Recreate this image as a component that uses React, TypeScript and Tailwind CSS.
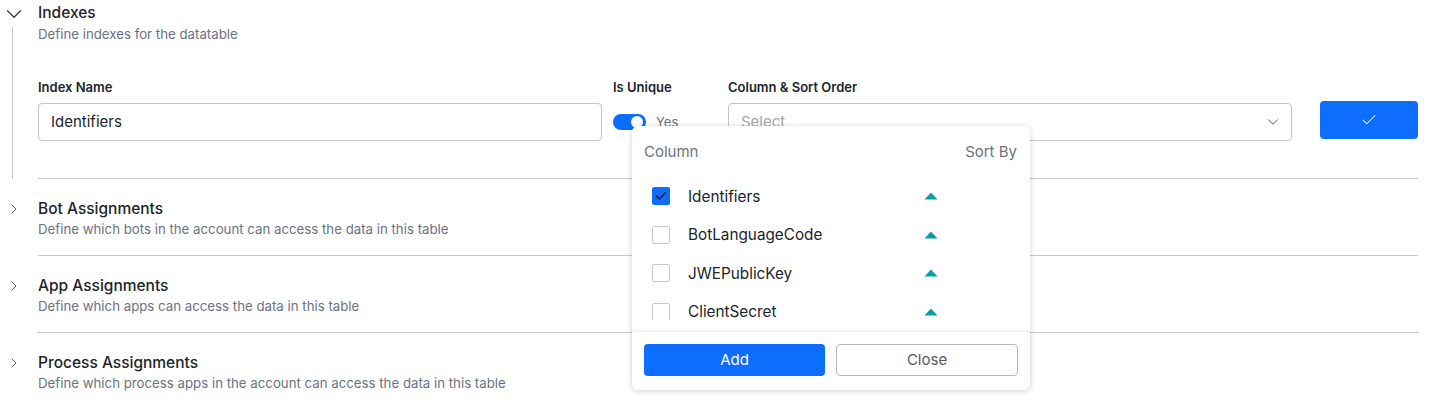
import { Check, ChevronDown, ChevronRight } from 'lucide-react';

const COLUMNS = [
  { name: 'Identifiers', checked: true },
  { name: 'BotLanguageCode', checked: false },
  { name: 'JWEPublicKey', checked: false },
  { name: 'ClientSecret', checked: false },
];

const SECTIONS = [
  { title: 'Bot Assignments', desc: 'Define which bots in the account can access the data in this table' },
  { title: 'App Assignments', desc: 'Define which apps can access the data in this table' },
  { title: 'Process Assignments', desc: 'Define which process apps in the account can access the data in this table' },
];

function SortArrow() {
  return (
    <svg width="14" height="8" viewBox="0 0 14 8" className="shrink-0">
      <path d="M7 0.5 L13.5 7.5 L0.5 7.5 Z" fill="#0e9ba5" />
    </svg>
  );
}

function ColumnPicker() {
  return (
    <div className="absolute left-[-96px] top-[47px] z-10 w-[398px] rounded-md bg-white shadow-[0_1px_6px_rgba(0,0,0,0.18)]">
      <div className="flex h-[44px] items-start justify-between pl-3 pr-[13px] pt-4 text-[15px] leading-5 text-[#6b7280]">
        <span>Column</span>
        <span>Sort By</span>
      </div>
      <div className="h-[150px] overflow-hidden pt-[7px]">
        {COLUMNS.map((col) => (
          <div key={col.name} className="flex h-[38.5px] items-center pl-5">
            {col.checked ? (
              <span className="flex h-[18px] w-[18px] items-center justify-center rounded-[2px] bg-[#0d6efd]">
                <Check size={14} strokeWidth={2.5} className="text-[#1a1a1a]" />
              </span>
            ) : (
              <span className="h-[18px] w-[18px] rounded-[2px] border border-[#c7c7c7] bg-white" />
            )}
            <span className="ml-[18px] w-[236px] text-[15.3px] leading-[15px] text-[#212529]">{col.name}</span>
            <SortArrow />
          </div>
        ))}
      </div>
      <div className="h-[12px]" />
      <div className="flex gap-[11px] rounded-b-md px-3 pb-[14px] pt-3 shadow-[0_-2px_3px_rgba(0,0,0,0.07)]">
        <button className="h-8 w-[181px] rounded-[4px] bg-[#0d6efd] text-[15px] text-white">Add</button>
        <button className="h-8 w-[182px] rounded-[4px] border border-[#b8b8b8] bg-white text-[15px] text-[#555b61]">
          Close
        </button>
      </div>
    </div>
  );
}

function IndexesSection() {
  return (
    <div className="flex">
      <div className="flex w-[38px] shrink-0 flex-col items-start">
        <ChevronDown size={26} strokeWidth={1.2} className="ml-[1px] mt-[1px] text-[#3c4147]" />
        <div className="ml-3 flex-1 border-l border-[#c9c9c9]" />
      </div>
      <div className="mr-[13px] flex-1 border-b border-[#c9c9c9] pb-[37px] pt-[3px]">
        <div className="text-[15.5px] font-medium leading-5 text-[#212529]">Indexes</div>
        <div className="mt-[3px] text-[13.25px] leading-4 text-[#6b7280]">Define indexes for the datatable</div>
        <div className="mt-[37px] flex items-start">
          <div className="w-[564px]">
            <div className="text-[13px] font-semibold leading-4 text-[#212529]">Index Name</div>
            <div className="mt-2 flex h-[38px] items-center rounded-[4px] border border-[#c4c4c4] px-3 text-[15px] text-[#212529]">
              Identifiers
            </div>
          </div>
          <div className="ml-[11px] w-[115px]">
            <div className="text-[13px] font-semibold leading-4 text-[#212529]">Is Unique</div>
            <div className="mt-[19px] flex items-center">
              <span className="relative h-4 w-[33px] rounded-full bg-[#0d6efd]">
                <span className="absolute right-[3px] top-[2px] h-3 w-3 rounded-full bg-white" />
              </span>
              <span className="ml-[10px] text-[13px] leading-4 text-[#6b7280]">Yes</span>
            </div>
          </div>
          <div className="relative w-[564px]">
            <div className="text-[13px] font-semibold leading-4 text-[#212529]">Column &amp; Sort Order</div>
            <div className="mt-2 flex h-[38px] items-center justify-between rounded-[4px] border border-[#c4c4c4] pl-3 pr-[9px] text-[15px] text-[#a3a7ab]">
              <span>Select</span>
              <ChevronDown size={18} strokeWidth={1.3} className="text-[#4b5157]" />
            </div>
            <ColumnPicker />
          </div>
          <button className="ml-[28px] mt-[22px] flex h-[38px] w-[98px] items-center justify-center rounded-[4px] bg-[#0d6efd]">
            <Check size={18} strokeWidth={1.4} className="text-white" />
          </button>
        </div>
      </div>
    </div>
  );
}

function CollapsedSection({ title, desc, last }: { title: string; desc: string; last: boolean }) {
  return (
    <div className="flex">
      <div className="w-[38px] shrink-0 pt-[22px]">
        <ChevronRight size={16} strokeWidth={1.3} className="ml-[6px] text-[#3c4147]" />
      </div>
      <div className={`mr-[13px] flex-1 pb-[18px] pt-5 ${last ? '' : 'border-b border-[#c9c9c9]'}`}>
        <div className="text-[15.5px] font-medium leading-5 text-[#212529]">{title}</div>
        <div className="mt-[2px] text-[13.25px] leading-4 text-[#6b7280]">{desc}</div>
      </div>
    </div>
  );
}

export default function App() {
  return (
    <div className="h-[400px] w-[1431px] overflow-hidden bg-white font-['Inter',sans-serif]">
      <IndexesSection />
      {SECTIONS.map((s, i) => (
        <CollapsedSection key={s.title} title={s.title} desc={s.desc} last={i === SECTIONS.length - 1} />
      ))}
    </div>
  );
}
